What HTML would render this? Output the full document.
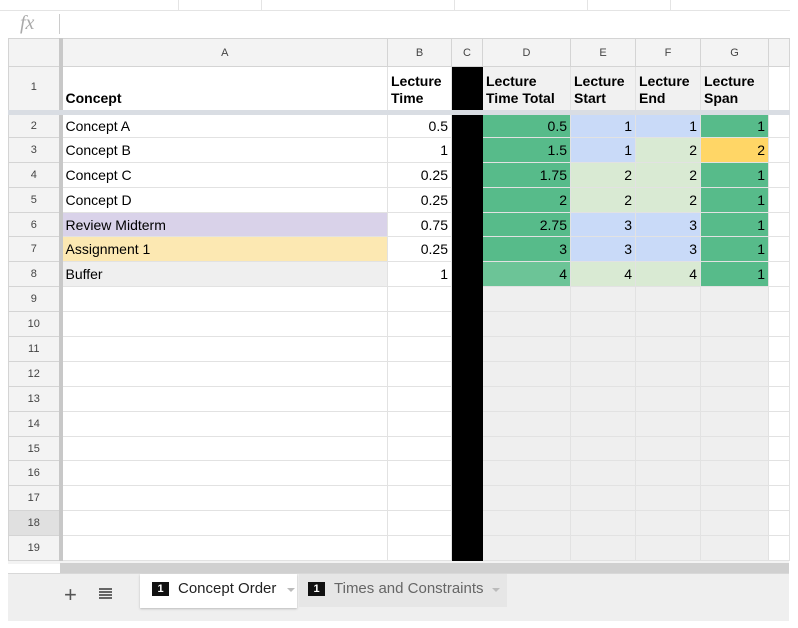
<!DOCTYPE html>
<html><head><style>
body{margin:0;width:798px;height:628px;background:#fff;font-family:"Liberation Sans",Arial,sans-serif;position:relative;overflow:hidden}
.a{position:absolute}
table{position:absolute;left:8px;top:38px;border-collapse:collapse;table-layout:fixed;width:781px}
td{border:1px solid #e2e2e2;padding:0 3px;font-size:14px;color:#000;overflow:hidden;white-space:nowrap;height:24.9px;box-sizing:border-box}
td.h{background:#f3f3f3;color:#444;font-size:11px;text-align:center;border-color:#d4d4d4}
tr.ch td{height:28px}
tr.r1 td{height:46px;vertical-align:bottom;font-weight:bold;line-height:17px;padding-bottom:3px;border-bottom:5px solid #d9dde3;background:#fff}
tr.r1 td.h{vertical-align:middle;font-weight:normal;background:#f3f3f3}
tr.r1 td.q{background:#f1f1f1}
.n{text-align:right}
td.k,tr.r1 td.k{background:#000;border-color:#000}
.g{background:#57bb8a}.b{background:#c9daf8}.l{background:#d9ead3}.y{background:#ffd666}
.gr td.e{background:#efefef}
.p{background:#d9d2e9}.o{background:#fce8b2}.s{background:#efefef}
td.rh{border-right:4px solid #c8c8c8}
</style></head><body>
<div class="a" style="left:0;top:10px;width:790px;height:1px;background:#e4e4e4"></div>
<div class="a" style="left:178px;top:0;width:1px;height:10px;background:#e4e4e4"></div>
<div class="a" style="left:261px;top:0;width:1px;height:10px;background:#e4e4e4"></div>
<div class="a" style="left:454px;top:0;width:1px;height:10px;background:#e4e4e4"></div>
<div class="a" style="left:587px;top:0;width:1px;height:10px;background:#e4e4e4"></div>
<div class="a" style="left:670px;top:0;width:1px;height:10px;background:#e4e4e4"></div>
<div class="a" style="left:20px;top:12px;font-family:'Liberation Serif',serif;font-style:italic;font-size:20px;color:#aaa">fx</div>
<div class="a" style="left:59px;top:14px;width:1px;height:20px;background:#ccc"></div>
<table>
<colgroup><col style="width:52px"><col style="width:327px"><col style="width:64px"><col style="width:31px"><col style="width:88px"><col style="width:65px"><col style="width:65px"><col style="width:68px"><col style="width:21px"></colgroup>
<tr class="ch"><td class="h rh"></td><td class="h">A</td><td class="h">B</td><td class="h">C</td><td class="h">D</td><td class="h">E</td><td class="h">F</td><td class="h">G</td><td class="h"></td></tr>
<tr class="r1"><td class="h rh">1</td><td>Concept</td><td style="position:relative">Lecture<br>Time<div class="a" style="top:0;width:0;height:0;border-top:7px solid #f4b400;border-left:7px solid transparent;left:-8px"></div></td><td class="k" style="border-bottom-color:#d9dde3"></td><td class="q">Lecture<br>Time Total</td><td class="q">Lecture<br>Start</td><td class="q">Lecture<br>End</td><td class="q">Lecture<br>Span</td><td></td></tr>
<tr><td class="h rh">2</td><td>Concept A</td><td class="n">0.5</td><td class="k"></td><td class="n g">0.5</td><td class="n b">1</td><td class="n b">1</td><td class="n g">1</td><td></td></tr>
<tr><td class="h rh">3</td><td>Concept B</td><td class="n">1</td><td class="k"></td><td class="n g">1.5</td><td class="n b">1</td><td class="n l">2</td><td class="n y">2</td><td></td></tr>
<tr><td class="h rh">4</td><td>Concept C</td><td class="n">0.25</td><td class="k"></td><td class="n g">1.75</td><td class="n l">2</td><td class="n l">2</td><td class="n g">1</td><td></td></tr>
<tr><td class="h rh">5</td><td>Concept D</td><td class="n">0.25</td><td class="k"></td><td class="n g">2</td><td class="n l">2</td><td class="n l">2</td><td class="n g">1</td><td></td></tr>
<tr><td class="h rh">6</td><td class="p">Review Midterm</td><td class="n">0.75</td><td class="k"></td><td class="n g">2.75</td><td class="n b">3</td><td class="n b">3</td><td class="n g">1</td><td></td></tr>
<tr><td class="h rh">7</td><td class="o">Assignment 1</td><td class="n">0.25</td><td class="k"></td><td class="n g">3</td><td class="n b">3</td><td class="n b">3</td><td class="n g">1</td><td></td></tr>
<tr><td class="h rh">8</td><td class="s">Buffer</td><td class="n">1</td><td class="k"></td><td class="n g" style="background:#6cc497">4</td><td class="n l">4</td><td class="n l">4</td><td class="n g">1</td><td></td></tr>
<tr class="gr"><td class="h rh">9</td><td></td><td></td><td class="k"></td><td class="e"></td><td class="e"></td><td class="e"></td><td class="e"></td><td></td></tr>
<tr class="gr"><td class="h rh">10</td><td></td><td></td><td class="k"></td><td class="e"></td><td class="e"></td><td class="e"></td><td class="e"></td><td></td></tr>
<tr class="gr"><td class="h rh">11</td><td></td><td></td><td class="k"></td><td class="e"></td><td class="e"></td><td class="e"></td><td class="e"></td><td></td></tr>
<tr class="gr"><td class="h rh">12</td><td></td><td></td><td class="k"></td><td class="e"></td><td class="e"></td><td class="e"></td><td class="e"></td><td></td></tr>
<tr class="gr"><td class="h rh">13</td><td></td><td></td><td class="k"></td><td class="e"></td><td class="e"></td><td class="e"></td><td class="e"></td><td></td></tr>
<tr class="gr"><td class="h rh">14</td><td></td><td></td><td class="k"></td><td class="e"></td><td class="e"></td><td class="e"></td><td class="e"></td><td></td></tr>
<tr class="gr"><td class="h rh">15</td><td></td><td></td><td class="k"></td><td class="e"></td><td class="e"></td><td class="e"></td><td class="e"></td><td></td></tr>
<tr class="gr"><td class="h rh">16</td><td></td><td></td><td class="k"></td><td class="e"></td><td class="e"></td><td class="e"></td><td class="e"></td><td></td></tr>
<tr class="gr"><td class="h rh">17</td><td></td><td></td><td class="k"></td><td class="e"></td><td class="e"></td><td class="e"></td><td class="e"></td><td></td></tr>
<tr class="gr"><td class="h rh" style="background:#e0e0e0">18</td><td></td><td></td><td class="k"></td><td class="e"></td><td class="e"></td><td class="e"></td><td class="e"></td><td></td></tr>
<tr class="gr"><td class="h rh">19</td><td></td><td></td><td class="k"></td><td class="e"></td><td class="e"></td><td class="e"></td><td class="e"></td><td></td></tr>
</table>
<div class="a" style="left:8px;top:561px;width:781px;height:3px;background:#f3f3f3"></div>
<div class="a" style="left:60px;top:563px;width:729px;height:10px;background:#d0d0d0"></div>
<div class="a" style="left:8px;top:573px;width:781px;height:47px;background:#efefef;border-top:1px solid #d8d8d8"></div>
<div class="a" style="left:64px;top:582px;font-size:22px;color:#555">+</div>
<div class="a" style="left:99px;top:588px;width:13px;height:11px;background:repeating-linear-gradient(#666 0 2px,transparent 2px 3px)"></div>
<div class="a" style="left:140px;top:574px;width:157px;height:34px;background:#fff;box-shadow:0 1px 2px #bbb"></div>
<div class="a" style="left:152px;top:582px;width:17px;height:14px;background:#111;color:#fff;font-size:11px;font-weight:bold;text-align:center;line-height:14px">1</div>
<div class="a" style="left:178px;top:580px;font-size:15px;color:#222">Concept Order</div>
<div class="a" style="left:287px;top:588px;border-top:4px solid #bbb;border-left:4px solid transparent;border-right:4px solid transparent"></div>
<div class="a" style="left:299px;top:574px;width:208px;height:33px;background:#e6e6e6"></div>
<div class="a" style="left:308px;top:582px;width:17px;height:14px;background:#111;color:#fff;font-size:11px;font-weight:bold;text-align:center;line-height:14px">1</div>
<div class="a" style="left:334px;top:580px;font-size:15px;color:#666">Times and Constraints</div>
<div class="a" style="left:492px;top:588px;border-top:4px solid #bbb;border-left:4px solid transparent;border-right:4px solid transparent"></div>
</body></html>
